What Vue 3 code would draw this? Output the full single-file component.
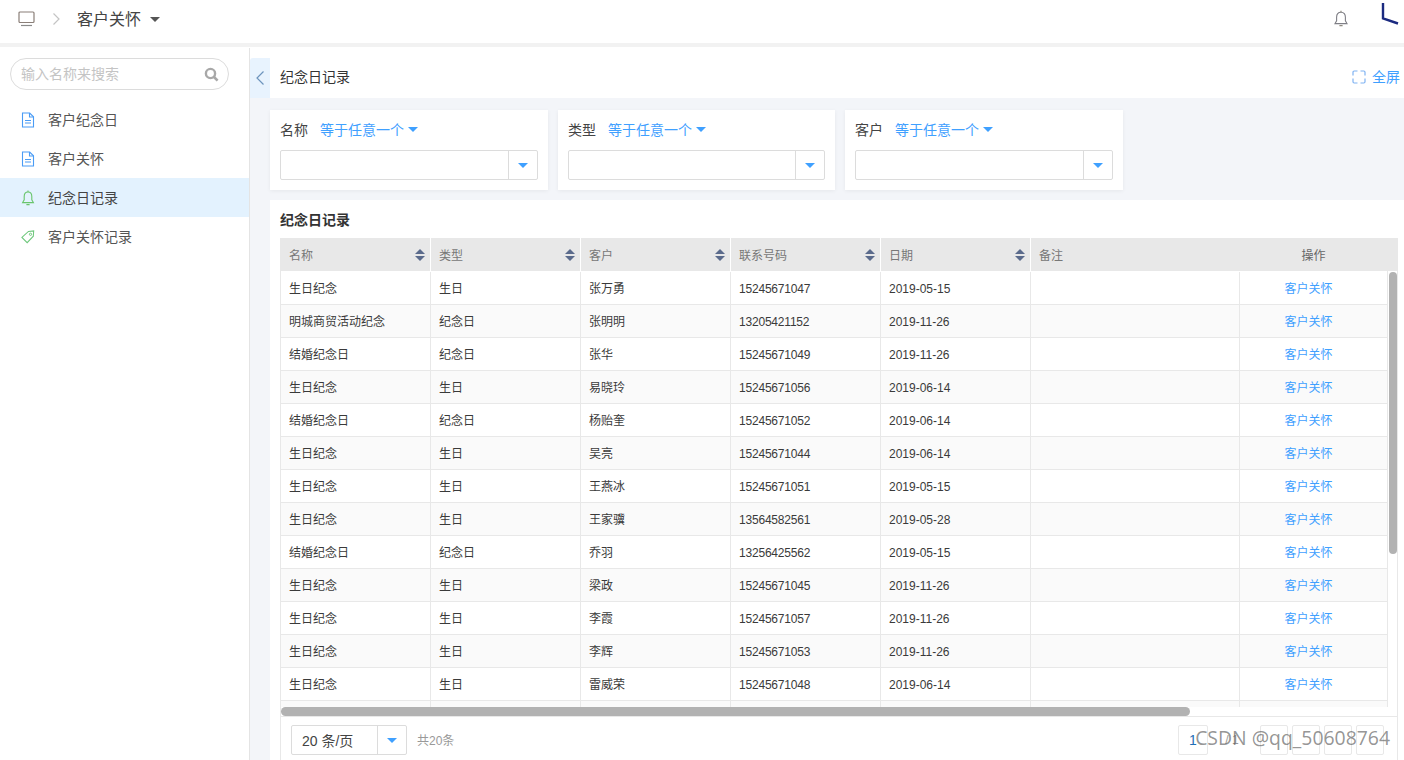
<script setup>
const menu = [
  { label: '客户纪念日', icon: 'doc' },
  { label: '客户关怀', icon: 'doc' },
  { label: '纪念日记录', icon: 'bell', active: true },
  { label: '客户关怀记录', icon: 'tag' },
]
const filters = ['名称', '类型', '客户']
const columns = ['名称', '类型', '客户', '联系号码', '日期']
const rows = [
  ['生日纪念', '生日', '张万勇', '15245671047', '2019-05-15'],
  ['明城商贸活动纪念', '纪念日', '张明明', '13205421152', '2019-11-26'],
  ['结婚纪念日', '纪念日', '张华', '15245671049', '2019-11-26'],
  ['生日纪念', '生日', '易晓玲', '15245671056', '2019-06-14'],
  ['结婚纪念日', '纪念日', '杨贻奎', '15245671052', '2019-06-14'],
  ['生日纪念', '生日', '吴亮', '15245671044', '2019-06-14'],
  ['生日纪念', '生日', '王燕冰', '15245671051', '2019-05-15'],
  ['生日纪念', '生日', '王家骥', '13564582561', '2019-05-28'],
  ['结婚纪念日', '纪念日', '乔羽', '13256425562', '2019-05-15'],
  ['生日纪念', '生日', '梁政', '15245671045', '2019-11-26'],
  ['生日纪念', '生日', '李霞', '15245671057', '2019-11-26'],
  ['生日纪念', '生日', '李辉', '15245671053', '2019-11-26'],
  ['生日纪念', '生日', '雷威荣', '15245671048', '2019-06-14'],
  ['', '', '', '', ''],
]
</script>

<template>
  <div class="page">
    <header class="topbar">
      <svg class="monitor" width="18" height="16" viewBox="0 0 18 16" fill="none">
        <rect x="1" y="1" width="15" height="10.5" rx="1" stroke="#8a7f78" stroke-width="1.2" />
        <path d="M3 14.500h11" stroke="#8a8a8a" stroke-width="1.2" />
      </svg>
      <svg class="crumb-arrow" width="9" height="14" viewBox="0 0 9 14" fill="none">
        <path d="M1.500 1.500 7 7l-5.500 5.500" stroke="#c4c4c4" stroke-width="1.2" />
      </svg>
      <span class="crumb-title">客户关怀</span>
      <span class="caret caret-dark"></span>
      <span class="spacer"></span>
      <svg class="top-bell" width="16" height="18" viewBox="0 0 16 18" fill="none">
        <path d="M8 2.200c-3 0-4.400 2.200-4.400 5v3.600L2 13.600h12l-1.600-2.800V7.200c0-2.800-1.400-5-4.400-5Z" stroke="#7f7f86" stroke-width="1.1" />
        <path d="M8 .8v1.400M6.400 15.600h3.200" stroke="#8f8a80" stroke-width="1.2" />
      </svg>
      <svg class="logo" width="20" height="25" viewBox="0 0 20 25" fill="none">
        <path d="M2 3v15.500l15 5" stroke="#1b2a80" stroke-width="2.400" />
      </svg>
    </header>

    <div class="body">
      <aside class="sidebar">
        <div class="search">
          <span class="search-text">输入名称来搜索</span>
          <svg width="15" height="15" viewBox="0 0 15 15" fill="none">
            <circle cx="6.500" cy="6.500" r="4.600" stroke="#a8a8a8" stroke-width="2.400" />
            <path d="m10 10 3.600 3.600" stroke="#a8a8a8" stroke-width="2.600" />
          </svg>
        </div>
        <nav class="menu">
          <div v-for="m in menu" :key="m.label" class="menu-item" :class="{ active: m.active }">
            <svg v-if="m.icon === 'doc'" width="14" height="16" viewBox="0 0 14 16" fill="none">
              <path d="M1.500 1h7.200l3.800 3.800V15h-11Z" stroke="#4a9cf5" stroke-width="1.100" />
              <path d="M8.500 1v4h4M4 8.500h6M4 11h6" stroke="#4a9cf5" stroke-width="1.100" />
            </svg>
            <svg v-else-if="m.icon === 'bell'" width="14" height="16" viewBox="0 0 14 16" fill="none">
              <path d="M7 2C4.400 2 3.200 4 3.200 6.400v3.400L1.600 12.600h10.800l-1.600-2.800V6.400C10.800 4 9.600 2 7 2Z" stroke="#69c56c" stroke-width="1.100" />
              <path d="M7 .6V2M5.400 14.600h3.200" stroke="#69c56c" stroke-width="1.100" />
            </svg>
            <svg v-else width="14" height="14" viewBox="0 0 15 15" fill="none">
              <path d="M1 8 8 1.600l5.600-.6-.4 5.600L6.600 13.600Z" stroke="#6cc77a" stroke-width="1.100" />
              <circle cx="10.200" cy="4.600" r="1.200" stroke="#6cc77a" />
            </svg>
            <span>{{ m.label }}</span>
          </div>
        </nav>
      </aside>

      <main class="main">
        <div class="title-bar">
          <div class="collapse">
            <svg width="10" height="16" viewBox="0 0 10 16" fill="none">
              <path d="M8.500 1.500 2 8l6.500 6.500" stroke="#6d94bd" stroke-width="1.200" />
            </svg>
          </div>
          <span class="page-title">纪念日记录</span>
          <span class="spacer"></span>
          <svg class="full-icon" width="14" height="14" viewBox="0 0 14 14" fill="none">
            <path d="M1 5.500V2.200A1.200 1.200 0 0 1 2.200 1h3.300M8.500 1h3.300A1.200 1.200 0 0 1 13 2.200v3.300M13 8.500v3.300a1.200 1.200 0 0 1-1.200 1.200H8.500M5.500 13H2.200A1.200 1.200 0 0 1 1 11.800V8.500" stroke="#7fb2f2" stroke-width="1.200" />
          </svg>
          <span class="full-text">全屏</span>
        </div>

        <section class="filters">
          <div v-for="f in filters" :key="f" class="filter-card">
            <div class="filter-head">
              <span class="filter-name">{{ f }}</span>
              <span class="filter-op">等于任意一个</span>
              <span class="caret caret-blue"></span>
            </div>
            <div class="select">
              <span class="select-value"></span>
              <span class="select-btn"><span class="caret caret-blue"></span></span>
            </div>
          </div>
        </section>

        <section class="table-card">
          <h2 class="table-title">纪念日记录</h2>
          <div class="table">
            <div class="thead">
              <div v-for="c in columns" :key="c" class="th">
                <span>{{ c }}</span>
                <span class="sorter"><i class="up"></i><i class="down"></i></span>
              </div>
              <div class="th th-note">备注</div>
              <div class="th th-action">操作</div>
            </div>
            <div class="tbody">
              <div v-for="(r, i) in rows" :key="i" class="tr" :class="{ stripe: i % 2 === 1 }">
                <div v-for="(v, j) in r" :key="j" class="td">{{ v }}</div>
                <div class="td td-note"></div>
                <div class="td td-action">{{ r[0] ? '客户关怀' : '' }}</div>
              </div>
              <div class="vbar"><div class="vthumb"></div></div>
            </div>
            <div class="htrack"><div class="hbar"></div></div>
            <div class="pager">
              <div class="size-select">
                <span class="size-text">20 条/页</span>
                <span class="size-btn"><span class="caret caret-blue"></span></span>
              </div>
              <span class="total">共20条</span>
              <span class="spacer"></span>
              <span class="page-box page-input">1</span>
              <span class="page-sep">/ 1</span>
              <span class="page-box"></span>
              <span class="page-box"></span>
              <span class="page-box"></span>
              <span class="page-box"></span>
            </div>
          </div>
        </section>
      </main>
    </div>
    <div class="watermark">CSDN @qq_50608764</div>
  </div>
</template>

<style>
html, body { margin: 0; overflow: hidden; background: #fff; }
</style>

<style scoped>
.page {
  position: relative;
  width: 1404px;
  height: 760px;
  overflow: hidden;
  display: flex;
  flex-direction: column;
  font-family: "Liberation Sans", "Noto Sans CJK SC", sans-serif;
  font-size: 12px;
  color: #333;
}
.spacer { flex: 1; }
.topbar {
  height: 47px;
  flex: none;
  box-sizing: border-box;
  display: flex;
  align-items: center;
  padding-left: 18px;
  background: #fff;
  border-bottom: 4px solid #f2f2f2;
}
.monitor { margin-top: -5px; }
.crumb-arrow { margin: -5px 0 0 16px; }
.crumb-title { margin: -8px 0 0 16px; font-size: 16px; color: #444; }
.caret-dark { margin: -5px 0 0 9px; }
.top-bell { margin: -6px 32px 0 0; }
.logo { align-self: flex-start; margin-right: 3px; }
.caret {
  display: inline-block;
  width: 0;
  height: 0;
  border-left: 5.500px solid transparent;
  border-right: 5.500px solid transparent;
}
.caret-dark { border-top: 5.500px solid #555; }
.caret-blue { border-top: 5.500px solid #3fa0ff; }

.body { flex: 1; display: flex; min-height: 0; padding-top: 1px; }
.sidebar {
  width: 250px;
  flex: none;
  box-sizing: border-box;
  border-right: 1px solid #e4e4e4;
  background: #fff;
}
.search {
  height: 32px;
  box-sizing: border-box;
  margin: 10px 20px 10px 10px;
  padding: 0 9px 0 10px;
  border: 1px solid #dcdcdc;
  border-radius: 16px;
  display: flex;
  align-items: center;
  justify-content: space-between;
}
.search-text { font-size: 14px; line-height: 20px; color: #c4c4c4; }
.menu-item {
  height: 39px;
  display: flex;
  align-items: center;
  gap: 13px;
  padding-left: 21px;
  font-size: 14px;
  color: #555;
}
.menu-item span { position: relative; top: -1px; }
.menu-item.active { background: #e3f2fe; color: #444; }

.main {
  flex: 1;
  min-width: 0;
  display: flex;
  flex-direction: column;
  background: #f3f5f9;
}
.title-bar {
  height: 50px;
  flex: none;
  display: flex;
  align-items: flex-end;
  background: #fff;
  position: relative;
  padding-bottom: 11px;
  box-sizing: border-box;
}
.collapse {
  position: absolute;
  left: 0;
  top: 10px;
  width: 20px;
  height: 40px;
  background: #e8f3fe;
  border-radius: 3px 0 0 0;
  display: flex;
  align-items: center;
  justify-content: center;
}
.page-title { margin-left: 30px; font-size: 14px; color: #333; line-height: 19px; }
.full-icon { margin: 0 6px 3px 0; }
.full-text { margin-right: 4px; font-size: 14px; color: #3fa0ff; line-height: 19px; }

.filters { display: flex; gap: 10px; padding: 12px 0 10px 20px; flex: none; }
.filter-card {
  width: 278px;
  height: 80px;
  padding: 0 10px;
  box-sizing: border-box;
  background: #fff;
  box-shadow: 0 1px 4px rgba(0, 0, 0, 0.06);
}
.filter-card:nth-child(2) { width: 277px; }
.filter-head { height: 40px; padding-bottom: 2px; box-sizing: border-box; display: flex; align-items: center; font-size: 14px; }
.filter-name { margin-right: 12px; color: #444; }
.filter-op { color: #3fa0ff; margin-right: 4px; }
.select {
  height: 30px;
  box-sizing: border-box;
  border: 1px solid #dcdcdc;
  border-radius: 2px;
  display: flex;
  background: #fff;
}
.select-value { flex: 1; }
.select-btn {
  width: 29px;
  box-sizing: border-box;
  border-left: 1px solid #dcdcdc;
  display: flex;
  align-items: center;
  justify-content: center;
}

.table-card {
  flex: 1;
  min-height: 0;
  margin-left: 20px;
  padding: 0 6px 0 10px;
  background: #fff;
  display: flex;
  flex-direction: column;
}
.table-title {
  margin: 0;
  height: 38px;
  box-sizing: border-box;
  display: flex;
  align-items: center;
  font-size: 14px;
  font-weight: 700;
  color: #333;
  flex: none;
}
.table {
  flex: 1;
  min-height: 0;
  display: flex;
  flex-direction: column;
  border-left: 1px solid #e8e8e8;
  border-right: 1px solid #e8e8e8;
}
.thead {
  height: 33px;
  flex: none;
  display: flex;
  background: #e8e8e8;
  color: #777;
}
.th {
  width: 150px;
  flex: none;
  box-sizing: border-box;
  padding: 0 5px 0 8px;
  display: flex;
  align-items: center;
  justify-content: space-between;
  border-right: 1px solid #fff;
}
.th-note { width: 209px; border-right: 0; }
.th-action { flex: 1; width: auto; justify-content: center; border-right: 0; padding: 0 10px 0 0; color: #666; }
.sorter { display: flex; flex-direction: column; gap: 2px; }
.sorter i {
  width: 0;
  height: 0;
  border-left: 5px solid transparent;
  border-right: 5px solid transparent;
}
.sorter .up { border-bottom: 5px solid #5b6b8c; }
.sorter .down { border-top: 5px solid #5b6b8c; }
.tbody {
  position: relative;
  height: 436px;
  flex: none;
  overflow: hidden;
  padding: 1px 10px 0 0;
  box-sizing: border-box;
}
.tr {
  height: 33px;
  display: flex;
  box-sizing: border-box;
  border-bottom: 1px solid #e8e8e8;
  color: #3a3a3a;
}
.tr.stripe { background: #fafafa; }
.td {
  width: 150px;
  flex: none;
  box-sizing: border-box;
  padding: 1px 8px 0;
  line-height: 33px;
  border-right: 1px solid #e8e8e8;
  white-space: nowrap;
}
.td:nth-child(4) { letter-spacing: -0.2px; }
.td-note { width: 209px; }
.td-action { flex: 1; width: auto; border-right: 0; text-align: center; color: #3fa0ff; padding: 1px 10px 0 0; }
.vbar {
  position: absolute;
  right: 0;
  top: 0;
  bottom: 0;
  width: 10px;
  background: #fff;
  border-left: 1px solid #e8e8e8;
  box-sizing: border-box;
}
.vthumb {
  position: absolute;
  left: 1px;
  top: 1px;
  width: 8px;
  height: 282px;
  border-radius: 4px;
  background: #b2b2b2;
}
.htrack {
  height: 10px;
  flex: none;
  box-sizing: border-box;
  border-bottom: 1px solid #e8e8e8;
}
.hbar {
  width: 909px;
  height: 9px;
  border-radius: 5px;
  background: #b2b2b2;
}
.pager {
  flex: 1;
  display: flex;
  align-items: flex-start;
  padding: 8px 13px 0 10px;
}
.size-select {
  width: 116px;
  height: 30px;
  box-sizing: border-box;
  border: 1px solid #dcdcdc;
  border-radius: 2px;
  display: flex;
  align-items: center;
  font-size: 14px;
  color: #444;
}
.size-text { flex: 1; padding-left: 10px; }
.size-btn {
  width: 29px;
  box-sizing: border-box;
  height: 100%;
  border-left: 1px solid #dcdcdc;
  display: flex;
  align-items: center;
  justify-content: center;
}
.total { margin-left: 10px; line-height: 32px; color: #999; }
.page-box {
  width: 28px;
  height: 30px;
  box-sizing: border-box;
  border: 1px solid #e8e8e8;
  border-radius: 2px;
  margin-left: 4px;
  line-height: 28px;
  text-align: center;
  font-size: 14px;
}
.page-input { width: 30px; color: #1f6fb5; margin-left: 0; }
.page-sep { width: 48px; text-align: center; line-height: 30px; color: #999; }
.watermark {
  position: absolute;
  right: 14px;
  top: 726px;
  font-family: "Open Sans", sans-serif;
  font-size: 19.400px;
  line-height: 24px;
  color: rgba(80, 80, 80, 0.62);
  white-space: nowrap;
}
</style>
